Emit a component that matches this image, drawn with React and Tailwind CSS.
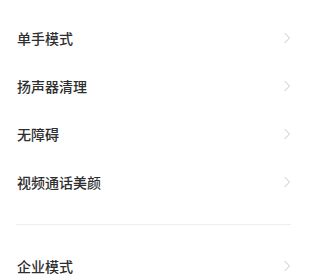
import React from 'react';

const items = ['单手模式', '扬声器清理', '无障碍', '视频通话美颜'];

const Chevron = () => (
  <svg width="8" height="12" viewBox="0 0 8 12" fill="none" className="shrink-0">
    <path d="M1.5 1L6.5 6L1.5 11" stroke="#c8c8c8" strokeWidth="1" />
  </svg>
);

const Row = ({ label }) => (
  <div className="flex h-12 items-center justify-between pl-[17px] pr-[30px]">
    <span className="text-[14px] font-medium leading-none text-[#2e2e2e]">{label}</span>
    <Chevron />
  </div>
);

const App = () => {
  return (
    <div
      className="h-[276px] w-[321px] overflow-hidden bg-white pt-[14px]"
      style={{ fontFamily: '"Noto Sans CJK SC", "Noto Sans", sans-serif' }}
    >
      {items.map((label) => (
        <Row key={label} label={label} />
      ))}
      {/* Divider */}
      <div className="mx-4 mt-[18px] h-px w-[275px] bg-[#eeeeee]" />
      <div className="mt-[17px]">
        <Row label="企业模式" />
      </div>
    </div>
  );
};

export default App;
